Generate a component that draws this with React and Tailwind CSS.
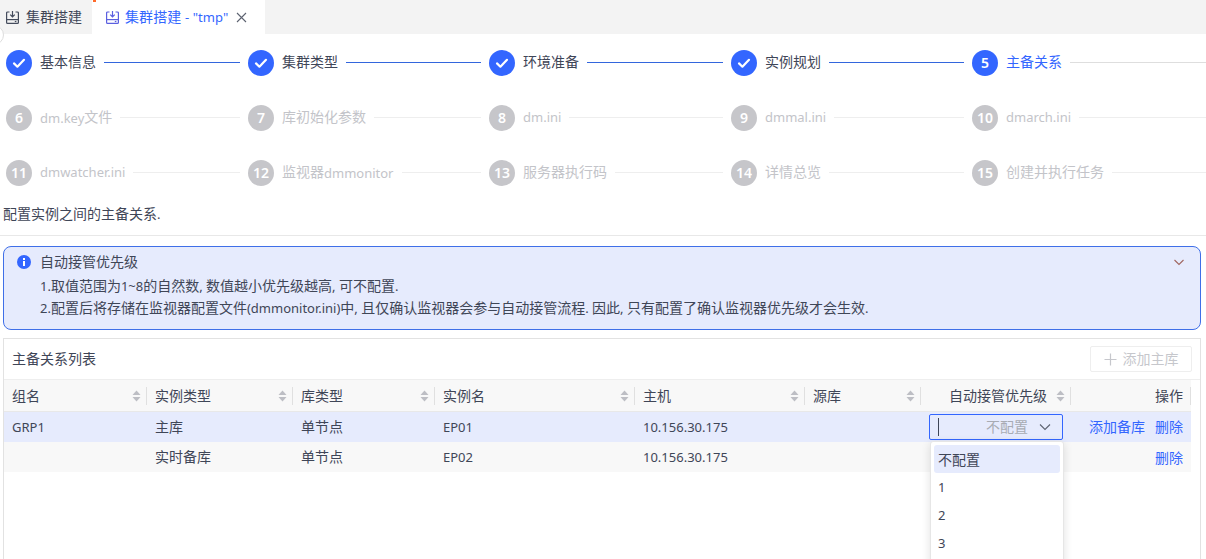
import React from "react";

const FONT = '"Noto Sans", "Noto Sans CJK SC", sans-serif';

// Chinese runs are set at 14px, Latin runs and digits at 13px, as the picture has them.
const T = ({ children, lift }) => (
  <>
    {String(children).split(/([\u3400-\u9fff]+)/).map((part, i) =>
      i % 2 === 1 ? <span key={i} className={lift ? "text-[14px] align-[1px]" : "text-[14px]"}>{part}</span> : part
    )}
  </>
);

const TabIcon = ({ color }) => (
  <svg width="15" height="15" viewBox="0 0 15 15" fill="none" stroke={color} strokeWidth="1.2" className="shrink-0">
    <path d="M4.5 2H2.6a1 1 0 0 0-1 1v9.4a1 1 0 0 0 1 1h9.8a1 1 0 0 0 1-1V3a1 1 0 0 0-1-1h-1.9" />
    <path d="M1.6 9.6h11.8" />
    <path d="M7.5 1v5.6M5.2 4.6l2.3 2.2 2.3-2.2" />
    <path d="M9.8 11.5h1.6" />
  </svg>
);

const Step = ({ n, label, state, last }) => {
  const done = state === "done";
  const active = state === "active";
  const on = done || active;
  return (
    <div className="flex items-center min-w-0">
      <div className={`w-[26px] h-[26px] rounded-full shrink-0 flex items-center justify-center text-white font-semibold text-[14px] ${on ? "bg-[#3366ff]" : "bg-[#c6c6ca]"}`}>
        {done ? (
          <svg width="16" height="16" viewBox="0 0 16 16" fill="none" stroke="white" strokeWidth="2.2" strokeLinecap="round" strokeLinejoin="round">
            <path d="M3 8.4l3.4 3.3L13 4.8" />
          </svg>
        ) : n}
      </div>
      <span className={`ml-2 text-[13px] whitespace-nowrap ${done ? "text-[#3f4657]" : active ? "text-[#3366ff]" : "text-[#c3c4c9]"}`}><T lift>{label}</T></span>
      <div className={`ml-2 flex-1 h-px ${done ? "bg-[#3366dd]" : active ? "bg-[#dedede]" : "bg-[#eeeeee]"} ${last ? "" : "mr-2"}`} />
    </div>
  );
};

const Sorter = () => (
  <svg width="9" height="12" viewBox="0 0 9 12" className="shrink-0">
    <path d="M4.5 0.5L8.5 5H0.5z" fill="#bdbec4" />
    <path d="M4.5 11.5L8.5 7H0.5z" fill="#bdbec4" />
  </svg>
);

const steps = [
  [1, "基本信息", "done"], [2, "集群类型", "done"], [3, "环境准备", "done"], [4, "实例规划", "done"], [5, "主备关系", "active"],
  [6, "dm.key文件"], [7, "库初始化参数"], [8, "dm.ini"], [9, "dmmal.ini"], [10, "dmarch.ini"],
  [11, "dmwatcher.ini"], [12, "监视器dmmonitor"], [13, "服务器执行码"], [14, "详情总览"], [15, "创建并执行任务"],
];

const cols = "grid grid-cols-[143px_146px_142px_200px_170px_116px_150px_120px]";

const headers = ["组名", "实例类型", "库类型", "实例名", "主机", "源库"];

export default function App() {
  return (
    <div className="w-[1206px] h-[559px] overflow-hidden bg-white relative text-[13px] text-[#3f4657]" style={{ fontFamily: FONT }}>
      {/* tabs */}
      <div className="h-[34px] bg-[#f3f3f3] flex items-stretch">
        <div className="w-[92px] flex items-center pl-[5px] gap-[6px] text-[#3f4657]">
          <TabIcon color="#444b5c" />
          <span className="whitespace-nowrap"><T>集群搭建</T></span>
        </div>
        <div className="w-[173px] bg-white flex items-center pl-[13px] text-[#3366ff]">
          <TabIcon color="#5b5fe0" />
          <span className="ml-[5px] whitespace-nowrap tracking-[0.1px]"><T>集群搭建 - "tmp"</T></span>
          <svg width="11" height="11" viewBox="0 0 11 11" stroke="#5c6270" strokeWidth="1.1" className="ml-[8px]">
            <path d="M1 1l9 9M10 1l-9 9" />
          </svg>
        </div>
      </div>
      <div className="absolute left-[-16px] top-[25px] w-[20px] h-[20px] rounded-full bg-white border border-[#dddddd]" />
      <div className="absolute left-[93px] top-0 w-[3px] h-[2px] bg-[#ff6a2a]" />

      {/* steps */}
      <div className="grid grid-cols-[242px_241px_242px_241px_234px] pl-[6px] auto-rows-[55px] mt-[1px]">
        {steps.map(([n, label, state], i) => (
          <Step key={n} n={n} label={label} state={state} last={i % 5 === 4} />
        ))}
      </div>

      {/* description */}
      <div className="h-[36px] pl-[3px] border-b border-[#e8e8e8] leading-[18px] pt-[5px]"><T>配置实例之间的主备关系.</T></div>

      {/* alert */}
      <div className="mx-[3px] w-[1198px] h-[84px] mt-[10px] rounded-[8px] border border-[#3f6fe8] bg-[#e6ebfd] pl-[13px] pr-[14px] pt-[4px]">
        <div className="flex items-center h-[21px]">
          <svg width="14" height="14" viewBox="0 0 14 14" className="shrink-0">
            <circle cx="7" cy="7" r="7" fill="#3366ff" />
            <rect x="6" y="6" width="2" height="5" fill="white" />
            <rect x="6" y="3" width="2" height="2" fill="white" />
          </svg>
          <span className="ml-[9px]"><T>自动接管优先级</T></span>
          <svg width="12" height="12" viewBox="0 0 12 12" fill="none" stroke="#a0665f" strokeWidth="1.1" className="ml-auto mr-[1px]">
            <path d="M1.5 4l4.5 4.5L10.5 4" />
          </svg>
        </div>
        <div className="pl-[23px] mt-[3px] leading-[22px] whitespace-nowrap">
          <div><T>1.取值范围为1~8的自然数, 数值越小优先级越高, 可不配置.</T></div>
          <div><T>2.配置后将存储在监视器配置文件(dmmonitor.ini)中, 且仅确认监视器会参与自动接管流程. 因此, 只有配置了确认监视器优先级才会生效.</T></div>
        </div>
      </div>

      {/* card */}
      <div className="mx-[3px] w-[1198px] mt-[8px] h-[240px] border border-[#e2e2e2]">
        <div className="h-[41px] flex items-center justify-between pl-[8px] pr-[8px] border-b border-[#eeeeee]">
          <span><T>主备关系列表</T></span>
          <div className="w-[102px] h-[26px] border border-[#eeeeee] rounded-[2px] flex items-center justify-center gap-[6px] text-[#c6c7cc]">
            <svg width="13" height="13" viewBox="0 0 13 13" stroke="#c6c7cc" strokeWidth="1.2"><path d="M6.5 0.5v12M0.5 6.5h12" /></svg>
            <span><T>添加主库</T></span>
          </div>
        </div>

        <div className="w-[1187px]">
          <div className={`${cols} h-[32px] bg-[#f8f8f8] border-b border-[#e8e8e8] items-center`}>
            {headers.map((h) => (
              <div key={h} className="h-[18px] flex items-center justify-between pl-[8px] pr-[5px] border-r border-[#e0e0e0] whitespace-nowrap">
                <span><T>{h}</T></span>
                <Sorter />
              </div>
            ))}
            <div className="h-[18px] flex items-center justify-end gap-[9px] pr-[5px] border-r border-[#e0e0e0] whitespace-nowrap">
              <span><T>自动接管优先级</T></span>
              <Sorter />
            </div>
            <div className="h-[18px] flex items-center justify-end pr-[7px] border-r border-[#e0e0e0]"><T>操作</T></div>
          </div>

          <div className={`${cols} h-[30px] bg-[#e6ebfd] items-center`}>
            <div className="pl-[8px] pt-[2px]">GRP1</div>
            <div className="pl-[8px]"><T>主库</T></div>
            <div className="pl-[8px]"><T>单节点</T></div>
            <div className="pl-[8px] pt-[2px]">EP01</div>
            <div className="pl-[8px] pt-[2px]">10.156.30.175</div>
            <div />
            <div className="pl-[8px]">
              <div className="w-[134px] h-[26px] rounded-[2px] border border-[#3366ff] flex items-center pl-[8px] pr-[11px] bg-[#e6ebfd]">
                <div className="w-px h-[18px] bg-[#3f4657]" />
                <span className="ml-auto text-[#a8abb3]"><T>不配置</T></span>
                <svg width="12" height="12" viewBox="0 0 12 12" fill="none" stroke="#5c6270" strokeWidth="1.1" className="ml-[11px]">
                  <path d="M1 3.5l5 5 5-5" />
                </svg>
              </div>
            </div>
            <div className="flex justify-end gap-[10px] pr-[8px] text-[#3366ff] whitespace-nowrap">
              <span><T>添加备库</T></span>
              <span><T>删除</T></span>
            </div>
          </div>

          <div className={`${cols} h-[30px] bg-[#f8f8f8] items-center`}>
            <div />
            <div className="pl-[8px]"><T>实时备库</T></div>
            <div className="pl-[8px]"><T>单节点</T></div>
            <div className="pl-[8px] pt-[2px]">EP02</div>
            <div className="pl-[8px] pt-[2px]">10.156.30.175</div>
            <div />
            <div />
            <div className="flex justify-end pr-[8px] text-[#3366ff]"><T>删除</T></div>
          </div>
        </div>
      </div>

      {/* dropdown overlay */}
      <div className="absolute left-[930px] top-[441px] w-[134px] h-[140px] bg-white rounded-[3px] border border-[#e6e6e6] shadow-[0_2px_10px_rgba(0,0,0,0.12)] px-[3px] pt-[3px]">
        <div className="h-[28px] rounded-[3px] bg-[#e6ebfd] flex items-center pl-[4px]"><T lift>不配置</T></div>
        <div className="h-[28px] flex items-center pl-[4px] pt-[2px]">1</div>
        <div className="h-[28px] flex items-center pl-[4px] pt-[2px]">2</div>
        <div className="h-[28px] flex items-center pl-[4px] pt-[2px]">3</div>
      </div>
    </div>
  );
}
